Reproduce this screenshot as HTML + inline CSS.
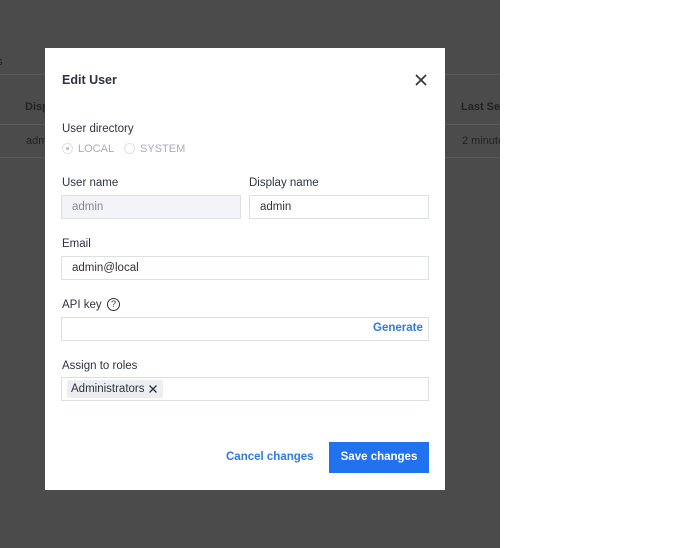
<!DOCTYPE html>
<html><head><style>
body{margin:0;width:685px;height:548px;position:relative;background:#fff;font-family:"Liberation Sans",sans-serif;overflow:hidden}
.ov{position:absolute;left:0;top:0;width:500px;height:548px;background:#4b4b4b;overflow:hidden}
.ln{position:absolute;left:0;width:500px;height:1px;background:#5a5a5a}
.bt{position:absolute;font-size:11px;color:#222;white-space:nowrap}
.m{position:absolute;left:45px;top:48px;width:400px;height:442px;background:#fff}
.a{position:absolute;font-size:11.5px;color:#2e3340;white-space:nowrap}
.in{position:absolute;border:1px solid #dcdfe4;box-sizing:border-box;height:24px;font-size:11.5px;color:#333;padding-left:10px;line-height:22px}
</style></head><body>
<div class="ov">
<div class="ln" style="top:74px"></div><div class="ln" style="top:124px"></div><div class="ln" style="top:157px"></div>
<div class="bt" style="left:-3px;top:56px;color:#222">s</div>
<div class="bt" style="left:25px;top:101px;font-weight:bold">Disp</div>
<div class="bt" style="left:26px;top:135px">adm</div>
<div class="bt" style="left:461px;top:101px;font-weight:bold">Last Ses</div>
<div class="bt" style="left:462px;top:135px">2 minute</div>
</div>
<div class="m">
<div class="a" style="left:17px;top:25px;font-size:12.5px;font-weight:bold">Edit User</div>
<svg style="position:absolute;left:370px;top:26px" width="12" height="12"><path d="M1 1L11 11M11 1L1 11" stroke="#2e3340" stroke-width="1.6"/></svg>
<div class="a" style="left:17px;top:75px">User directory</div>
<div style="position:absolute;left:17px;top:95px;width:11px;height:11px;border:1px solid #dde0e4;border-radius:50%;box-sizing:border-box"><div style="width:3px;height:3px;background:#bbb;border-radius:50%;margin:3px"></div></div>
<div class="a" style="left:33px;top:95px;color:#aab;font-size:11px">LOCAL</div>
<div style="position:absolute;left:79px;top:95px;width:11px;height:11px;border:1px solid #dde0e4;border-radius:50%;box-sizing:border-box"></div>
<div class="a" style="left:95px;top:95px;color:#aab;font-size:11px">SYSTEM</div>
<div class="a" style="left:17px;top:129px">User name</div>
<div class="a" style="left:204px;top:129px">Display name</div>
<div class="in" style="left:16px;top:147px;width:180px;background:#f3f4f7;color:#889">admin</div>
<div class="in" style="left:204px;top:147px;width:180px">admin</div>
<div class="a" style="left:17px;top:190px">Email</div>
<div class="in" style="left:16px;top:208px;width:368px">admin@local</div>
<div class="a" style="left:17px;top:251px">API key</div>
<div style="position:absolute;left:62px;top:250px;width:13px;height:13px;border:1px solid #2e3340;border-radius:50%;box-sizing:border-box;font-size:9px;text-align:center;line-height:11px;color:#2e3340">?</div>
<div class="in" style="left:16px;top:269px;width:368px"></div>
<div class="a" style="left:328px;top:274px;color:#2f7be0;font-weight:bold">Generate</div>
<div class="a" style="left:17px;top:312px">Assign to roles</div>
<div class="in" style="left:16px;top:329px;width:368px"></div>
<div style="position:absolute;left:22px;top:332px;width:96px;height:18px;background:#eceef1;border-radius:2px"></div>
<div class="a" style="left:26px;top:335px">Administrators</div>
<svg style="position:absolute;left:104px;top:337px" width="8" height="8"><path d="M0.5 0.5L7.5 7.5M7.5 0.5L0.5 7.5" stroke="#2e3340" stroke-width="1.3"/></svg>
<div class="a" style="left:181px;top:403px;color:#2f7be0;font-weight:bold">Cancel changes</div>
<div style="position:absolute;left:284px;top:394px;width:100px;height:31px;background:#2172ee;color:#fff;font-size:11.5px;font-weight:bold;text-align:center;line-height:31px">Save changes</div>
</div>
</body></html>
